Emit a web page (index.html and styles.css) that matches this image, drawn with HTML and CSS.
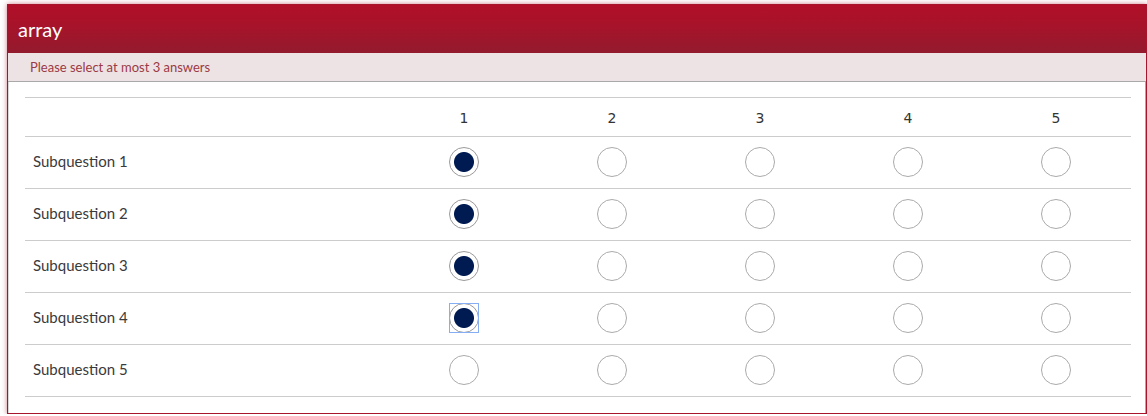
FILE: index.html
```html
<!DOCTYPE html>
<html>
<head>
<meta charset="utf-8">
<link rel="stylesheet" href="styles.css">
</head>
<body>
<div class="panel">
  <div class="panel-heading">array</div>
  <div class="help">Please select at most 3 answers</div>
  <div class="panel-body">
    <div class="grid">
      <div class="row head">
        <div class="cell label"></div>
        <div class="cell">1</div><div class="cell">2</div><div class="cell">3</div><div class="cell">4</div><div class="cell">5</div>
      </div>
      <div class="row">
        <div class="cell label">Subquestion 1</div>
        <div class="cell"><span class="radio checked"></span></div>
        <div class="cell"><span class="radio"></span></div>
        <div class="cell"><span class="radio"></span></div>
        <div class="cell"><span class="radio"></span></div>
        <div class="cell"><span class="radio"></span></div>
      </div>
      <div class="row">
        <div class="cell label">Subquestion 2</div>
        <div class="cell"><span class="radio checked"></span></div>
        <div class="cell"><span class="radio"></span></div>
        <div class="cell"><span class="radio"></span></div>
        <div class="cell"><span class="radio"></span></div>
        <div class="cell"><span class="radio"></span></div>
      </div>
      <div class="row">
        <div class="cell label">Subquestion 3</div>
        <div class="cell"><span class="radio checked"></span></div>
        <div class="cell"><span class="radio"></span></div>
        <div class="cell"><span class="radio"></span></div>
        <div class="cell"><span class="radio"></span></div>
        <div class="cell"><span class="radio"></span></div>
      </div>
      <div class="row">
        <div class="cell label">Subquestion 4</div>
        <div class="cell"><span class="focus-box"><span class="radio checked"></span></span></div>
        <div class="cell"><span class="radio"></span></div>
        <div class="cell"><span class="radio"></span></div>
        <div class="cell"><span class="radio"></span></div>
        <div class="cell"><span class="radio"></span></div>
      </div>
      <div class="row">
        <div class="cell label">Subquestion 5</div>
        <div class="cell"><span class="radio"></span></div>
        <div class="cell"><span class="radio"></span></div>
        <div class="cell"><span class="radio"></span></div>
        <div class="cell"><span class="radio"></span></div>
        <div class="cell"><span class="radio"></span></div>
      </div>
    </div>
  </div>
</div>
</body>
</html>
```
FILE: styles.css
```css
html, body {
  margin: 0;
  padding: 0;
  background: #ffffff;
}
body {
  font-family: Lato, "Open Sans", "Liberation Sans", sans-serif;
  color: #333333;
}
.panel {
  margin: 4px 0 0 7px;
  width: 1138px;
  height: 408px;
  border: 1px solid #a8142c;
  box-shadow: 0 0 5px rgba(170, 20, 45, 0.55);
  display: flex;
  flex-direction: column;
  background: #ffffff;
}
.panel-heading {
  height: 48px;
  box-sizing: border-box;
  padding: 11px 0 0 10px;
  font-size: 20px;
  line-height: 26px;
  color: #ffffff;
  background: linear-gradient(to bottom, #b10f29 0%, #a8132a 40%, #931a2d 100%);
}
.help {
  height: 29px;
  box-sizing: border-box;
  border-bottom: 1px solid #a9a9a9;
  background: #ede3e4;
  padding: 6px 0 0 22px;
  font-size: 13px;
  line-height: 16px;
  color: #9b3a45;
}
.panel-body {
  flex: 1;
  padding: 15px 15px 0 16px;
  border-right: 1px solid #a9a9a9;
  border-left: 1px solid #d8d8d8;
}
.grid {
  width: 1106px;
  display: flex;
  flex-direction: column;
}
.row {
  display: grid;
  grid-template-columns: 365px repeat(5, 148px);
  height: 52px;
  box-sizing: border-box;
  border-bottom: 1px solid #cccccc;
}
.row.head {
  height: 40px;
  border-top: 1px solid #cccccc;
  font-family: "DejaVu Sans", "Liberation Sans", sans-serif;
  font-size: 14px;
  color: #333333;
}
.cell {
  display: flex;
  align-items: center;
  justify-content: center;
  padding-bottom: 2px;
}
.row.head .cell {
  padding-top: 2px;
  padding-bottom: 0;
}
.cell.label {
  justify-content: flex-start;
  padding-left: 8px;
  padding-bottom: 3px;
  font-size: 15px;
  color: #3a3a3a;
}
.radio {
  display: block;
  width: 30px;
  height: 30px;
  box-sizing: border-box;
  border: 1px solid #ababab;
  border-radius: 50%;
  background: #ffffff;
}
.radio.checked {
  background: radial-gradient(circle, #001b52 0, #001b52 9.5px, #ffffff 10.5px);
  border-color: #9a9a9a;
}
.focus-box {
  display: block;
  outline: 1px solid #86aef5;
  outline-offset: -1px;
}
```
